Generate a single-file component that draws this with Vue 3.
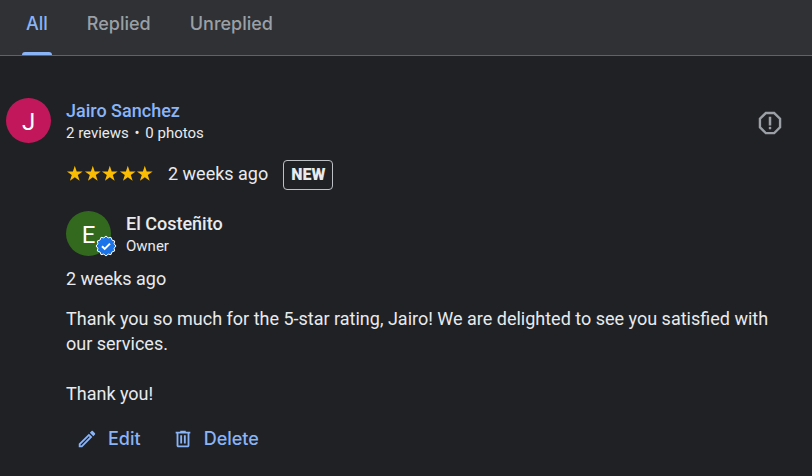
<script setup>
import { ref } from 'vue'

const tabs = ['All', 'Replied', 'Unreplied']
const active = ref('All')
const stars = 5

// Twelve-lobed seal outline, alternating outer and inner radius
const seal = Array.from({ length: 24 }, (_, i) => {
  const r = i % 2 ? 8.4 : 10
  const a = (i * Math.PI) / 12
  return `${(11 + r * Math.sin(a)).toFixed(2)},${(11 - r * Math.cos(a)).toFixed(2)}`
}).join(' ')
</script>

<template>
  <div class="page">
    <nav class="tabs" role="tablist" aria-label="Review filter">
      <button
        v-for="tab in tabs"
        :key="tab"
        type="button"
        role="tab"
        class="tab"
        :class="{ active: tab === active }"
        :aria-selected="tab === active"
        @click="active = tab"
      >
        {{ tab }}
      </button>
    </nav>

    <main class="review">
      <div class="avatar pink">J</div>
      <div class="body">
        <header class="author">
          <div class="who">
            <a class="name link" href="#">Jairo Sanchez</a>
            <div class="meta">2 reviews <span class="dot">•</span> 0 photos</div>
          </div>
          <button class="report" type="button" aria-label="Report review">
            <svg viewBox="0 0 24 24" width="30" height="30">
              <path d="M15.73 3H8.27L3 8.27v7.46L8.27 21h7.46L21 15.73V8.27L15.73 3zM19.1 14.95L14.95 19.1H9.05L4.9 14.95V9.05L9.05 4.9h5.9l4.15 4.15v5.9z" />
              <circle cx="12" cy="16" r="1.1" />
              <path d="M11 7h2v7h-2z" />
            </svg>
          </button>
        </header>

        <div class="rating">
          <div class="stars" role="img" aria-label="5 out of 5 stars">
            <svg v-for="n in stars" :key="n" viewBox="0 0 24 24" height="18">
              <path d="M12 17.9 18.6 22.6 16.1 14.8 22.7 10.1H14.6L12 2.2 9.4 10.1H1.3L7.9 14.8 5.4 22.6z" />
            </svg>
          </div>
          <span class="time">2 weeks ago</span>
          <span class="badge">NEW</span>
        </div>

        <section class="reply">
          <div class="owner">
            <div class="avatar green">
              E
              <svg class="verified" viewBox="0 0 22 22" width="22" height="22">
                <polygon :points="seal" />
                <path d="M7 11.2 9.7 13.9 15 8.6" />
              </svg>
            </div>
            <div class="who">
              <div class="name">El Costeñito</div>
              <div class="meta">Owner</div>
            </div>
          </div>
          <div class="reply-time">2 weeks ago</div>
          <p class="text">Thank you so much for the 5-star rating, Jairo! We are delighted to see you satisfied with our services.</p>
          <p class="text">Thank you!</p>
          <div class="actions">
            <button class="action" type="button">
              <svg viewBox="0 0 24 24" width="22" height="22">
                <path d="M14.06 9.02l.92.92L5.92 19H5v-.92l9.06-9.06M17.66 3c-.25 0-.51.1-.7.29l-1.83 1.83 3.75 3.75 1.83-1.83c.39-.39.39-1.02 0-1.41l-2.34-2.34c-.2-.2-.45-.29-.71-.29zm-3.6 3.19L3 17.25V21h3.75L17.81 9.94l-3.75-3.75z" />
              </svg>
              Edit
            </button>
            <button class="action" type="button">
              <svg viewBox="0 0 24 24" width="22" height="22">
                <path d="M15 4V3H9v1H4v2h1v13c0 1.1.9 2 2 2h10c1.1 0 2-.9 2-2V6h1V4h-5zm2 15H7V6h10v13zM9 8h2v9H9zm4 0h2v9h-2z" />
              </svg>
              Delete
            </button>
          </div>
        </section>
      </div>
    </main>
  </div>
</template>

<style>
body {
  background: #202125;
}
</style>

<style scoped>
.page {
  color: #e8eaed;
  font-family: Roboto, sans-serif;
  font-size: 18px;
  line-height: 25px;
}
button {
  border: 0;
  padding: 0;
  background: none;
  font-family: inherit;
  cursor: pointer;
}
svg {
  display: block;
  flex: none;
  fill: currentColor;
}
.tabs {
  display: flex;
  gap: 31px;
  padding: 0 22px;
  background: #303134;
  border-bottom: 1px solid #5f6368;
}
.tab {
  display: flex;
  flex-direction: column;
  padding: 12px 4px 0;
  color: #9aa0a6;
  font-family: Inter, sans-serif;
  font-size: 18px;
  font-weight: 500;
  line-height: 24px;
}
.tab::after {
  content: "";
  align-self: stretch;
  height: 3px;
  margin: 16px -4px 0;
  border-radius: 3px 3px 0 0;
}
.tab.active {
  color: #8ab4f8;
}
.tab.active::after {
  background: #8ab4f8;
}
.review {
  display: flex;
  align-items: flex-start;
  gap: 15px;
  padding: 42px 27px 20px 6px;
}
.avatar {
  display: flex;
  flex: none;
  align-items: center;
  justify-content: center;
  position: relative;
  box-sizing: border-box;
  width: 45px;
  height: 45px;
  padding-top: 3px;
  border-radius: 50%;
  color: #fff;
  font-size: 24px;
}
.pink {
  background: #c2185b;
}
.green {
  background: #33691e;
}
.body {
  flex: 1;
  min-width: 0;
}
.author {
  display: flex;
  align-items: center;
  justify-content: space-between;
  height: 50px;
}
.name {
  display: block;
  font-weight: 500;
}
.link {
  color: #8ab4f8;
  text-decoration: none;
}
.meta {
  font-size: 15px;
  line-height: 20px;
}
.dot {
  margin: 0 2px;
}
.who {
  align-self: flex-start;
}
.report {
  color: #9aa0a6;
}
.rating {
  display: flex;
  align-items: flex-start;
  margin-top: 12px;
  line-height: 28px;
}
.stars {
  display: flex;
  width: 88px;
  padding-top: 4px;
  color: #fbbc04;
}
.stars svg {
  flex: 1;
  min-width: 0;
}
.time {
  margin: 0 15px 0 14px;
}
.badge {
  padding: 0 7px;
  border: 1px solid #bdc1c6;
  border-radius: 4px;
  font-size: 16px;
  font-weight: 900;
}
.reply {
  margin-top: 21px;
}
.owner {
  display: flex;
  gap: 15px;
}
.verified {
  position: absolute;
  right: -6px;
  bottom: -1px;
}
.verified polygon {
  fill: #1a73e8;
  stroke: #fff;
  stroke-width: 1;
  stroke-linejoin: round;
}
.verified path {
  fill: none;
  stroke: #fff;
  stroke-width: 2;
}
.reply-time {
  margin-top: 10px;
}
.text {
  margin: 15px 0 0;
}
.text + .text {
  margin-top: 25px;
}
.actions {
  display: flex;
  gap: 31px;
  margin-top: 21px;
  padding-left: 10px;
}
.action {
  display: flex;
  align-items: center;
  gap: 10px;
  color: #8ab4f8;
  font-family: Inter, sans-serif;
  font-size: 18px;
  font-weight: 500;
  line-height: 24px;
}
</style>
